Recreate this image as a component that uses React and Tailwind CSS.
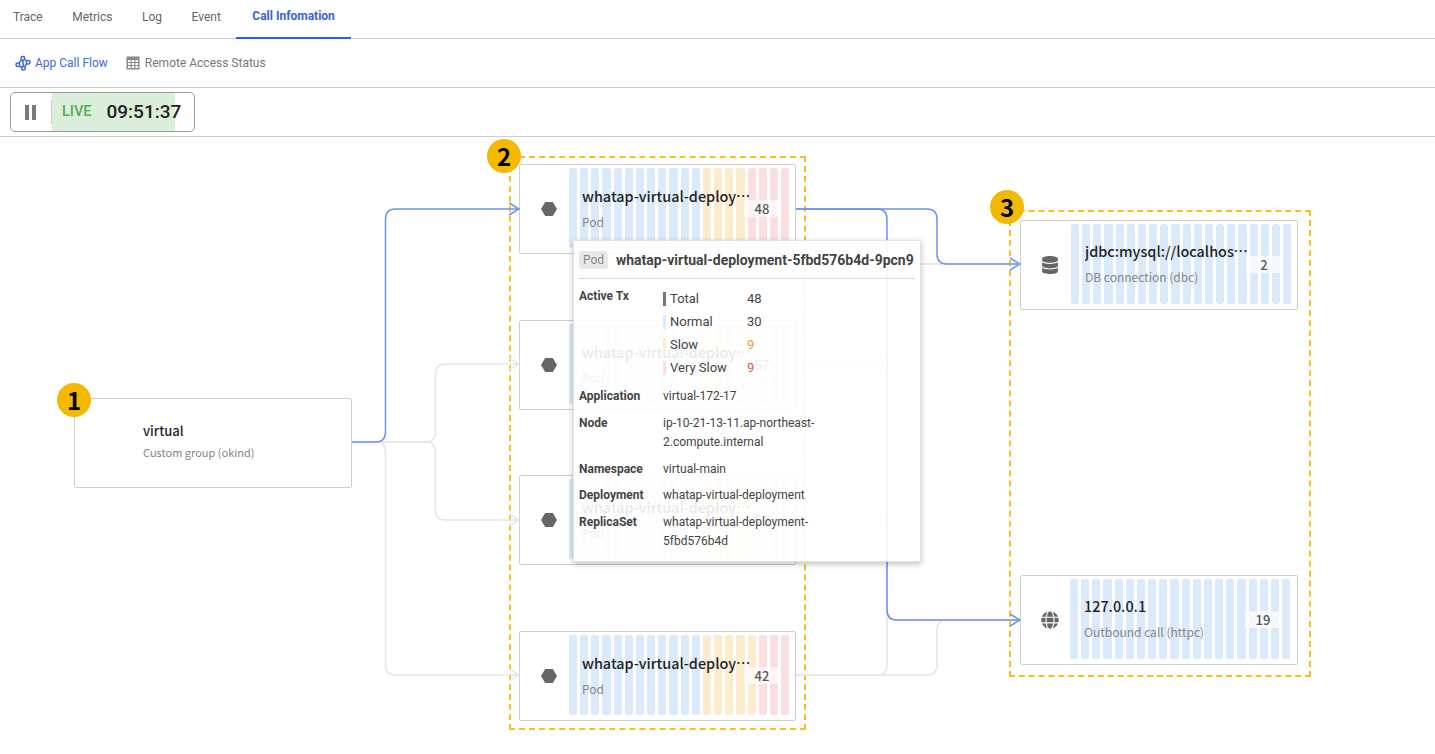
import React from "react";
import { FaDatabase, FaGlobe } from "react-icons/fa";

const tabs = ["Trace", "Metrics", "Log", "Event"];

const pods = [
  { pos: "top-[27px] left-[519px]", blue: 12, yellow: 4, red: 4, count: 48 },
  { pos: "top-[183px] left-[519px]", blue: 12, yellow: 3, red: 5, count: 57 },
  { pos: "top-[338px] left-[519px]", blue: 12, yellow: 5, red: 3, count: 51 },
  { pos: "top-[494px] left-[519px]", blue: 12, yellow: 5, red: 3, count: 42 },
];

const blueEdges = [
  "M352 305 H375.5 Q385.5 305 385.5 295 V82 Q385.5 72 395.5 72 H519",
  "M796 72 H927 Q937 72 937 82 V117 Q937 127 947 127 H1020",
  "M796 72 H877 Q887 72 887 82 V473 Q887 483 897 483 H1020",
];

const grayEdges = [
  "M352 305 H425.5 Q435.5 305 435.5 295 V237 Q435.5 227 445.5 227 H519",
  "M352 305 H425.5 Q435.5 305 435.5 315 V373 Q435.5 383 445.5 383 H519",
  "M352 305 H375.5 Q385.5 305 385.5 315 V528 Q385.5 538 395.5 538 H519",
  "M796 227 H877 Q887 227 887 217 V137 Q887 127 897 127 H1020",
  "M796 227 H877 Q887 227 887 237 V473 Q887 483 897 483 H1020",
  "M796 383 H877 Q887 383 887 373 V137 Q887 127 897 127 H1020",
  "M796 383 H877 Q887 383 887 393 V473 Q887 483 897 483 H1020",
  "M796 538 H877 Q887 538 887 528 V137",
  "M796 538 H927 Q937 538 937 528 V493 Q937 483 947 483 H1020",
];

const arrowTips = [
  { x: 519, y: 227, blue: false },
  { x: 519, y: 383, blue: false },
  { x: 519, y: 538, blue: false },
  { x: 519, y: 72, blue: true },
  { x: 1020, y: 127, blue: true },
  { x: 1020, y: 483, blue: true },
];

const FlowIcon = () => (
  <svg width="16" height="16" viewBox="0 0 16 16" fill="none" stroke="#3b66e0" strokeWidth="1.5">
    <rect x="1" y="8" width="3.6" height="3.6" rx="1.6" />
    <rect x="6" y="1.5" width="3.6" height="3.6" rx="1.6" />
    <rect x="11.4" y="5.5" width="3.6" height="3.6" rx="1.6" />
    <rect x="6.6" y="11.4" width="3.6" height="3.6" rx="1.6" />
    <path d="M4 8 L6.6 5 M9.4 4.2 L11.8 6 M11.6 8.8 L9.6 11.6 M4.2 11 L6.8 12.4 M7.8 5 L8.4 11.4" />
  </svg>
);

const TableIcon = () => (
  <svg width="14" height="14" viewBox="0 0 14 14">
    <rect x="0.5" y="0.5" width="13" height="13" fill="#8a8a8a" />
    <g fill="#fff">
      <rect x="2" y="4" width="2.6" height="2" />
      <rect x="5.7" y="4" width="2.6" height="2" />
      <rect x="9.4" y="4" width="2.6" height="2" />
      <rect x="2" y="7" width="2.6" height="2" />
      <rect x="5.7" y="7" width="2.6" height="2" />
      <rect x="9.4" y="7" width="2.6" height="2" />
      <rect x="2" y="10" width="2.6" height="2" />
      <rect x="5.7" y="10" width="2.6" height="2" />
      <rect x="9.4" y="10" width="2.6" height="2" />
    </g>
  </svg>
);

const Hexagon = () => (
  <svg width="16" height="14" viewBox="0 0 16 14">
    <path d="M4.2 0 H11.8 L16 7 L11.8 14 H4.2 L0 7 Z" fill="#666" />
  </svg>
);

const Bars = ({ blue, yellow, red }) => (
  <div className="flex h-[80px] w-[220px] gap-[3px]">
    {Array.from({ length: blue }).map((_, i) => (
      <div key={`b${i}`} className="flex-1 rounded-[2px] bg-[#dbeafb]" />
    ))}
    {Array.from({ length: yellow }).map((_, i) => (
      <div key={`y${i}`} className="flex-1 rounded-[2px] bg-[#fcebcd]" />
    ))}
    {Array.from({ length: red }).map((_, i) => (
      <div key={`r${i}`} className="flex-1 rounded-[2px] bg-[#fbdfe0]" />
    ))}
  </div>
);

const Node = ({
  className,
  icon,
  title,
  sub,
  count,
  bars,
  iconCol = "w-[49px]",
  textBox = "pt-[18px] pl-[13px]",
  titleClass = "w-[170px] text-[14.4px]",
  subClass = "mt-[7px] text-[12px]",
}) => (
  <div className={`absolute flex h-[90px] items-start rounded-[2px] border border-[#cfcfcf] bg-white pt-[3px] font-['Noto_Sans_CJK_KR',sans-serif] ${className}`}>
    <div className={`mb-[4px] flex shrink-0 items-center justify-center self-center pl-[8px] text-[#666] ${iconCol}`}>{icon}</div>
    <div className="relative">
      {bars}
      <div className={`absolute inset-0 ${textBox}`}>
        <div className={`truncate leading-[20px] font-medium text-[#1f1f1f] ${titleClass}`}>{title}</div>
        <div className={`leading-[18px] text-[#858585] ${subClass}`}>{sub}</div>
      </div>
      {count != null && (
        <div className="absolute top-[32px] right-[9px] flex h-[17px] w-[36px] items-center justify-center bg-white/70 text-[13px] font-medium text-[#555]">
          {count}
        </div>
      )}
    </div>
  </div>
);

const Marker = ({ className, children }) => (
  <div className={`absolute z-10 flex h-[34px] w-[34px] items-center justify-center rounded-full bg-[#f5b800] font-['Noto_Sans_CJK_KR',sans-serif] text-[24px] font-bold text-black ${className}`}>
    {children}
  </div>
);

const TxRow = ({ bar, label, value, valueClass = "text-[#444]" }) => (
  <div className="flex h-[23px] items-center text-[13px]">
    <div className={`h-[14px] w-[3px] ${bar}`} />
    <div className="ml-[4px] w-[77px] text-[#444]">{label}</div>
    <div className={valueClass}>{value}</div>
  </div>
);

const InfoRow = ({ label, children, className = "" }) => (
  <div className={`flex text-[12px] leading-[19px] ${className}`}>
    <div className="w-[84px] shrink-0 font-bold text-[#444]">{label}</div>
    <div className="w-[160px] text-[#444]">{children}</div>
  </div>
);

export default function App() {
  return (
    <div className="flex h-[754px] w-[1435px] flex-col overflow-hidden bg-white font-['Roboto',sans-serif]">
      <div className="flex h-[39px] border-b border-[#cdcdcd] pl-[13px] text-[12px] text-[#666]">
        {tabs.map((tab) => (
          <div key={tab} className="mr-[29.5px] pt-[10px] leading-[14px]">{tab}</div>
        ))}
        <div className="-ml-[14px] h-[39px] border-b-2 border-[#2f5fe0] px-[16px] pt-[9px] leading-[14px] font-bold text-[#3563e0]">
          Call Infomation
        </div>
      </div>

      <div className="flex h-[49px] items-center gap-[18px] border-b border-[#cdcdcd] pl-[15px] text-[12px]">
        <div className="flex items-center gap-[4px] text-[#3f6ae0]">
          <FlowIcon />
          App Call Flow
        </div>
        <div className="flex items-center gap-[5px] text-[#777]">
          <TableIcon />
          Remote Access Status
        </div>
      </div>

      <div className="flex h-[49px] items-center border-b border-[#cdcdcd] pl-[10px]">
        <div className="flex h-[40px] w-[185px] items-center rounded-[5px] border border-[#9a9a9a]">
          <div className="ml-[14px] flex gap-[3px]">
            <div className="h-[15px] w-[4px] bg-[#7a7a7a]" />
            <div className="h-[15px] w-[4px] bg-[#7a7a7a]" />
          </div>
          <div className="ml-[15px] h-[24px] w-px bg-[#ccc]" />
          <div className="flex h-[38px] w-[123px] items-center bg-[#dbeddb] pl-[10px]">
            <span className="text-[14.5px] font-medium text-[#4caf50]">LIVE</span>
            <span className="ml-[15px] text-[19px] font-medium whitespace-nowrap text-[#222]">09:51:37</span>
          </div>
        </div>
      </div>

      <div className="relative flex-1">
        <div className="absolute top-[19px] left-[509px] h-[574px] w-[297px] border-2 border-dashed border-[#fbbf24]" />
        <div className="absolute top-[73px] left-[1009px] h-[467px] w-[302px] border-2 border-dashed border-[#fbbf24]" />

        <Node
          className="top-[261px] left-[74px] w-[278px]"
          title="virtual"
          sub="Custom group (okind)"
          bars={<div className="h-[80px] w-[220px]" />}
          iconCol="w-[50px]"
          textBox="pt-[19px] pl-[18px]"
          titleClass="w-[170px] text-[13px]"
          subClass="mt-[2px] text-[11px]"
        />

        {pods.map((pod) => (
          <Node
            key={pod.pos}
            className={`w-[277px] ${pod.pos}`}
            icon={<Hexagon />}
            title="whatap-virtual-deployment-5fbd576b4d-9pcn9"
            sub="Pod"
            count={pod.count}
            bars={<Bars blue={pod.blue} yellow={pod.yellow} red={pod.red} />}
          />
        ))}

        <Node
          className="top-[83px] left-[1020px] w-[278px]"
          icon={<FaDatabase size={18} />}
          iconCol="w-[50px]"
          textBox="pt-[17px] pl-[14px]"
          titleClass="w-[167px] text-[14.4px]"
          title="jdbc:mysql://localhost:3306/whatap"
          sub="DB connection (dbc)"
          count={2}
          bars={<Bars blue={20} yellow={0} red={0} />}
        />
        <Node
          className="top-[438px] left-[1020px] w-[278px]"
          icon={<FaGlobe size={18} />}
          textBox="pt-[17px] pl-[14px]"
          title="127.0.0.1"
          sub="Outbound call (httpc)"
          count={19}
          bars={<Bars blue={20} yellow={0} red={0} />}
        />

        <svg className="pointer-events-none absolute inset-0" width="1435" height="617" fill="none">
          {grayEdges.map((d) => (
            <path key={d} d={d} stroke="#e6e6e6" strokeWidth="1.5" />
          ))}
          {blueEdges.map((d) => (
            <path key={d} d={d} stroke="#6b92f2" strokeWidth="1.5" />
          ))}
          {arrowTips.map((tip) => (
            <path
              key={`${tip.x}-${tip.y}`}
              d={`M${tip.x - 10} ${tip.y - 6} L${tip.x} ${tip.y} L${tip.x - 10} ${tip.y + 6}`}
              stroke={tip.blue ? "#6b92f2" : "#e6e6e6"}
              strokeWidth="1.5"
            />
          ))}
        </svg>

        <Marker className="top-[246px] left-[57px]">1</Marker>
        <Marker className="top-[2px] left-[487px]">2</Marker>
        <Marker className="top-[53px] left-[990px]">3</Marker>

        <div className="absolute top-[103px] left-[573px] z-20 h-[322px] w-[348px] border border-[#e4e4e4] bg-white/90 px-[5px] pt-[10px] shadow-[0_2px_6px_rgba(0,0,0,0.25)]">
          <div className="flex h-[28px] items-start border-b border-[#d9d9d9]">
            <span className="flex h-[18px] w-[29px] items-center justify-center rounded-[3px] bg-[#e8e8e8] text-[12px] text-[#888]">Pod</span>
            <span className="ml-[8px] text-[14px] leading-[18px] font-bold whitespace-nowrap text-[#444]">
              whatap-virtual-deployment-5fbd576b4d-9pcn9
            </span>
          </div>
          <div className="mt-[8px] flex">
            <div className="w-[84px] text-[12px] font-bold text-[#444]">Active Tx</div>
            <div>
              <TxRow bar="bg-[#777]" label="Total" value="48" />
              <TxRow bar="bg-[#dbeafb]" label="Normal" value="30" />
              <TxRow bar="bg-[#fcebcd]" label="Slow" value="9" valueClass="text-[#f59a3c]" />
              <TxRow bar="bg-[#fbdfe0]" label="Very Slow" value="9" valueClass="text-[#e5534b]" />
            </div>
          </div>
          <InfoRow label="Application" className="mt-[8px]">virtual-172-17</InfoRow>
          <InfoRow label="Node" className="mt-[8px]">ip-10-21-13-11.ap-northeast-2.compute.internal</InfoRow>
          <InfoRow label="Namespace" className="mt-[8px]">virtual-main</InfoRow>
          <InfoRow label="Deployment" className="mt-[7px]">whatap-virtual-deployment</InfoRow>
          <InfoRow label="ReplicaSet" className="mt-[8px]">whatap-virtual-deployment-5fbd576b4d</InfoRow>
        </div>
      </div>
    </div>
  );
}
